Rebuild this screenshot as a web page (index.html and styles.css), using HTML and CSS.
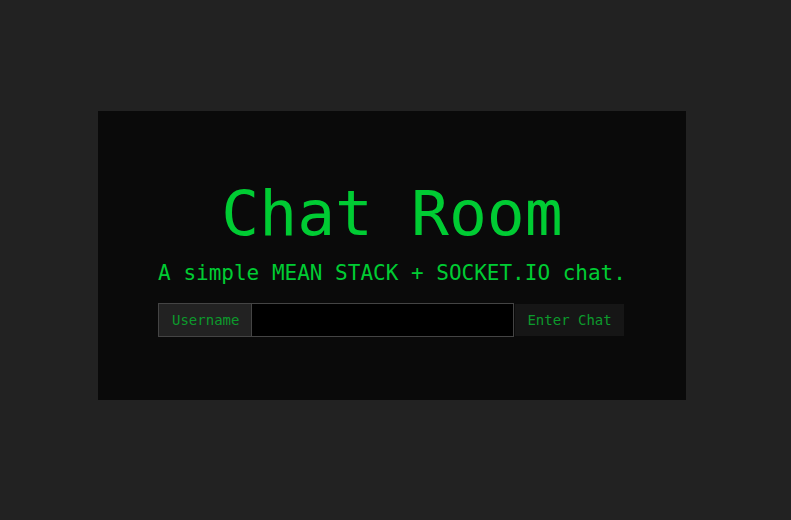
FILE: index.html
```html
<!DOCTYPE html>
<html lang="en">
<head>
<meta charset="utf-8">
<title>Chat Room</title>
<link rel="stylesheet" href="styles.css">
</head>
<body>
<div class="page">
  <div class="jumbotron">
    <h1 class="title">Chat Room</h1>
    <p class="lead">A simple MEAN STACK + SOCKET.IO chat.</p>
    <form class="login-form">
      <div class="input-group">
        <span class="addon">Username</span>
        <input class="field" type="text">
        <button class="enter-btn" type="button">Enter Chat</button>
      </div>
    </form>
  </div>
</div>
</body>
</html>
```
FILE: styles.css
```css
html, body {
  margin: 0;
  padding: 0;
  background: #222222;
  height: 100%;
}
body {
  font-family: "DejaVu Sans Mono", monospace;
  color: #00cc33;
}
.page {
  padding-top: 111px;
  padding-left: 98px;
}
.jumbotron {
  width: 588px;
  box-sizing: border-box;
  background: #0a0a0a;
  padding: 48px 60px 48px 60px;
  text-align: center;
}
.title {
  margin: 20px 0 10px;
  font-size: 63px;
  font-weight: normal;
  line-height: 1.1;
  color: #00cc33;
}
.lead {
  margin: 0 0 15px;
  font-size: 21px;
  line-height: 30px;
  color: #00cc33;
}
.login-form {
  margin: 0 0 15px;
}
.input-group {
  display: flex;
  height: 34px;
}
.addon {
  box-sizing: border-box;
  height: 34px;
  padding: 0 12px 0 13px;
  display: flex;
  align-items: center;
  background: #222222;
  border: 1px solid #444444;
  border-right: 0;
  font-size: 14px;
  color: #0c9a2c;
}
.field {
  box-sizing: border-box;
  width: 263px;
  height: 34px;
  margin: 0;
  padding: 6px 12px;
  background: #000000;
  border: 1px solid #444444;
  color: #00cc33;
  font-family: "DejaVu Sans Mono", monospace;
  font-size: 14px;
  outline: none;
}
.enter-btn {
  box-sizing: border-box;
  height: 34px;
  margin: 0;
  padding: 0 12px;
  background: #161616;
  border: 1px solid #0a0a0a;
  font-family: "DejaVu Sans Mono", monospace;
  font-size: 14px;
  color: #0c9a2c;
}
```
